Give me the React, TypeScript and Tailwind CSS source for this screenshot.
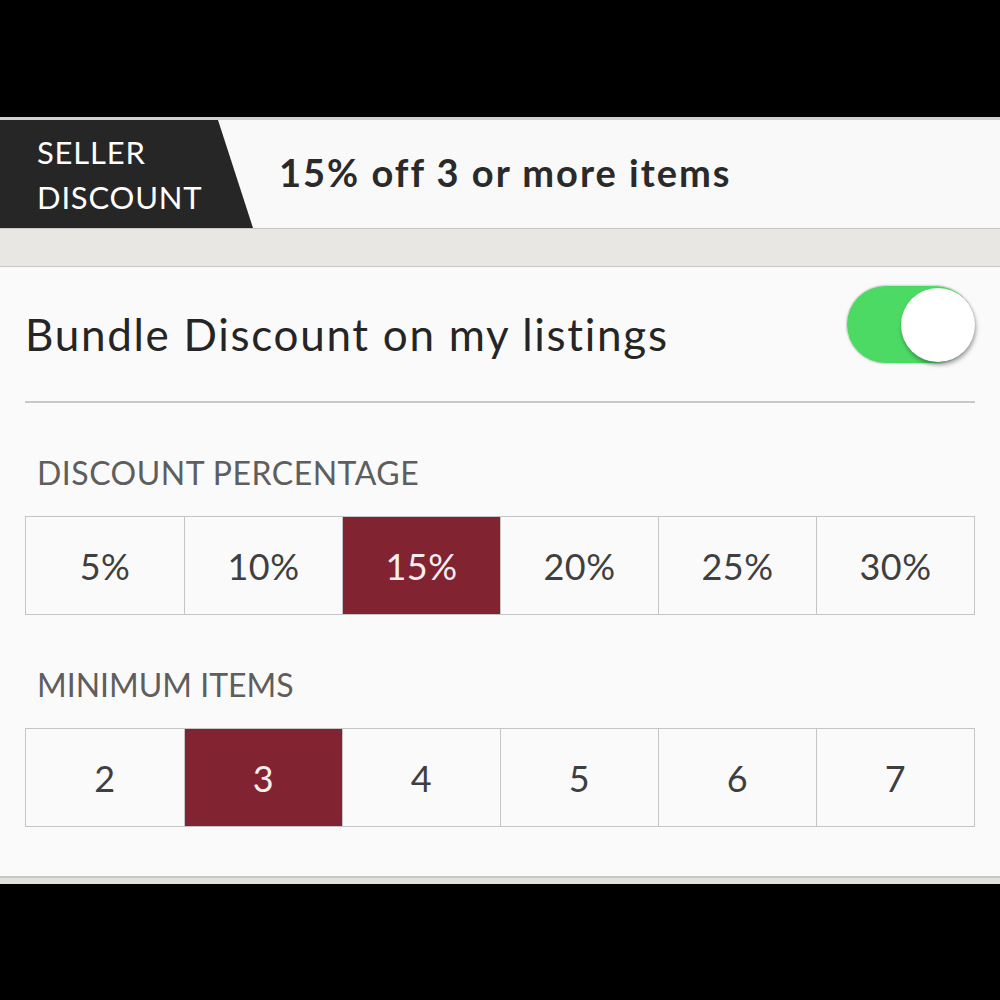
import React from "react";

const pct = ["5%", "10%", "15%", "20%", "25%", "30%"];
const items = ["2", "3", "4", "5", "6", "7"];

function Segments({ values, selected }: { values: string[]; selected: string }) {
  return (
    <div className="grid grid-cols-6 h-[99px] border border-[#c6c5c5]">
      {values.map((v, i) => (
        <div
          key={v}
          className={
            "flex items-center justify-center text-[36px] tracking-[0.5px] " +
            (i > 0 ? "border-l border-[#c6c5c5] " : "") +
            (v === selected ? "bg-[#822331] text-[#f6eef0]" : "text-[#3f3f3f]")
          }
        >
          {v}
        </div>
      ))}
    </div>
  );
}

export default function App() {
  return (
    <div
      className="w-[1000px] h-[1000px] bg-black flex flex-col"
      style={{ fontFamily: "Lato, 'Open Sans', sans-serif" }}
    >
      <div className="h-[117px] shrink-0" />
      <div className="border-t-[3px] border-[#d3d1ce] bg-[#faf9f9] h-[111px] shrink-0 flex">
        <div className="w-[253px] h-full bg-[#262626] [clip-path:polygon(0_0,218px_0,253px_100%,0_100%)] pl-[37px] pt-[2px] flex flex-col justify-center text-white text-[31px] leading-[45px] tracking-[0.8px]">
          <span>SELLER</span>
          <span>DISCOUNT</span>
        </div>
        <div className="flex items-center pl-[26px] pb-[4px] text-[38px] font-bold tracking-[2px] text-[#2a2a2a] whitespace-nowrap">
          15% off 3 or more items
        </div>
      </div>
      <div className="h-[39px] shrink-0 border-t border-b border-[#c9c7c3] bg-[#e9e7e3]" />
      <div className="h-[609px] shrink-0 bg-[#fbfafb] px-[25px] flex flex-col">
        <div className="h-[136px] flex items-center justify-between border-b-2 border-[#c9c8c8]">
          <span className="text-[44px] tracking-[1.7px] text-[#252525] whitespace-nowrap mt-[0px]">
            Bundle Discount on my listings
          </span>
          <div className="relative w-[129px] h-[79px] rounded-full bg-[#4cd964] border border-[#d8dcd8] mb-[20px] shadow-[0_0_2px_rgba(0,0,0,0.15)]">
            <div className="absolute right-[-1px] top-[2px] w-[74px] h-[74px] rounded-full bg-white shadow-[1px_3px_4px_rgba(0,0,0,0.35)]" />
          </div>
        </div>
        <div className="pl-[12px] mt-[50px] text-[32px] leading-[40px] tracking-[0.5px] text-[#5e5e5e] whitespace-nowrap">
          DISCOUNT PERCENTAGE
        </div>
        <div className="mt-[23px]">
          <Segments values={pct} selected="15%" />
        </div>
        <div className="pl-[12px] mt-[50px] text-[32px] leading-[40px] text-[#5e5e5e] whitespace-nowrap">
          MINIMUM ITEMS
        </div>
        <div className="mt-[23px]">
          <Segments values={items} selected="3" />
        </div>
      </div>
      <div className="h-[8px] shrink-0 border-t-2 border-[#c9c7c3] bg-[#e2e0dc]" />
    </div>
  );
}
